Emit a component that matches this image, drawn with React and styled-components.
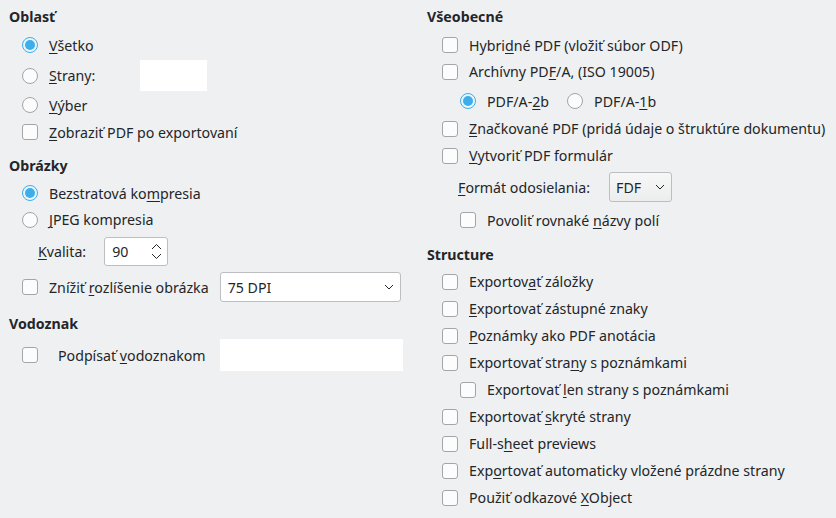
import React from "react";
import styled, { createGlobalStyle } from "styled-components";

const Global = createGlobalStyle`
  html, body { margin: 0; padding: 0; background: #eff0f1; }
  body { font-family: "Noto Sans", "Open Sans", sans-serif; font-size: 14.2px; color: #232629; }
`;

const Page = styled.div`
  width: 836px;
  height: 518px;
  box-sizing: border-box;
  padding: 6px 0 0 9px;
  display: grid;
  grid-template-columns: 394px 1fr;
  column-gap: 24px;
  background: #eff0f1;
`;

const Column = styled.div`
  display: flex;
  flex-direction: column;
`;

const Heading = styled.div`
  height: 22px;
  line-height: 22px;
  font-weight: 700;
  margin-top: ${(p) => p.$mt || 0}px;
`;

const Row = styled.div`
  display: flex;
  align-items: center;
  height: ${(p) => p.$h || 27}px;
  margin-top: ${(p) => p.$mt || 0}px;
  padding-left: ${(p) => p.$indent || 0}px;
`;

const Option = styled.label`
  display: flex;
  align-items: center;
  gap: ${(p) => p.$gap || 11}px;
  white-space: nowrap;
  margin-left: ${(p) => p.$ml || 0}px;
`;

const Mn = styled.span`
  text-decoration: underline;
  text-underline-offset: 2px;
  text-decoration-thickness: 1px;
`;

const Box = styled.span`
  width: 16px;
  height: 16px;
  box-sizing: border-box;
  border: 1px solid #a3a5a8;
  border-radius: 3px;
  background: #fcfcfc;
  flex: none;
`;

const Radio = styled.span`
  width: 16px;
  height: 16px;
  box-sizing: border-box;
  border-radius: 50%;
  border: 1px solid ${(p) => (p.$on ? "#3daee9" : "#a3a5a8")};
  background: ${(p) => (p.$on ? "#eaf6fc" : "#fcfcfc")};
  display: flex;
  align-items: center;
  justify-content: center;
  flex: none;
  &::after {
    content: "";
    display: ${(p) => (p.$on ? "block" : "none")};
    width: 10px;
    height: 10px;
    border-radius: 50%;
    background: #3daee9;
  }
`;

const TextField = styled.div`
  width: ${(p) => p.$w}px;
  height: ${(p) => p.$hh}px;
  background: #ffffff;
  margin-left: ${(p) => p.$ml || 0}px;
  flex: none;
`;

const Spin = styled.div`
  width: 64px;
  height: 29px;
  box-sizing: border-box;
  background: #fff;
  border: 1px solid #bcbec1;
  border-radius: 3px;
  display: flex;
  align-items: center;
  justify-content: space-between;
  padding: 0 5px 0 7px;
  margin-left: ${(p) => p.$ml || 0}px;
  flex: none;
`;

const Combo = styled.div`
  width: ${(p) => p.$w}px;
  height: 30px;
  box-sizing: border-box;
  background: ${(p) => (p.$button ? "linear-gradient(#f7f7f8, #eceded)" : "#fff")};
  border: 1px solid #bcbec1;
  border-radius: 3px;
  display: flex;
  align-items: center;
  justify-content: space-between;
  padding: 0 6px 0 ${(p) => p.$pl || 6}px;
  margin-left: ${(p) => p.$ml || 0}px;
  flex: none;
`;

const Chevron = () => (
  <svg width="10" height="6" viewBox="0 0 10 6">
    <path d="M1 1 L5 5 L9 1" fill="none" stroke="#232629" strokeWidth="1" />
  </svg>
);

const SpinArrows = () => (
  <svg width="11" height="17" viewBox="0 0 11 17">
    <path d="M1 6 L5.5 1.5 L10 6" fill="none" stroke="#232629" strokeWidth="1" />
    <path d="M1 11 L5.5 15.5 L10 11" fill="none" stroke="#232629" strokeWidth="1" />
  </svg>
);

const Check = ({ children, indent, mt, h }) => (
  <Row $indent={indent} $mt={mt} $h={h}>
    <Option>
      <Box />
      <span>{children}</span>
    </Option>
  </Row>
);

export default function App() {
  return (
    <>
      <Global />
      <Page>
        <Column>
          <Heading>Oblasť</Heading>
          <Row $indent={13} $mt={4} $h={26}>
            <Option>
              <Radio $on />
              <span><Mn>V</Mn>šetko</span>
            </Option>
          </Row>
          <Row $indent={13} $mt={2} $h={31}>
            <Option>
              <Radio />
              <span><Mn>S</Mn>trany:</span>
            </Option>
            <TextField $w={67} $hh={31} $ml={45} />
          </Row>
          <Row $indent={13} $h={28}>
            <Option>
              <Radio />
              <span><Mn>V</Mn>ýber</span>
            </Option>
          </Row>
          <Check indent={13} h={26}><Mn>Z</Mn>obraziť PDF po exportovaní</Check>

          <Heading $mt={10}>Obrázky</Heading>
          <Row $indent={13} $mt={3} $h={26}>
            <Option>
              <Radio $on />
              <span>Bezstratová ko<Mn>m</Mn>presia</span>
            </Option>
          </Row>
          <Row $indent={13} $h={27}>
            <Option>
              <Radio />
              <span><Mn>J</Mn>PEG kompresia</span>
            </Option>
          </Row>
          <Row $indent={29} $mt={4} $h={29}>
            <span><Mn>K</Mn>valita:</span>
            <Spin $ml={18}>
              <span>90</span>
              <SpinArrows />
            </Spin>
          </Row>
          <Row $indent={13} $mt={6} $h={30}>
            <Option>
              <Box />
              <span>Znížiť <Mn>r</Mn>ozlíšenie obrázka</span>
            </Option>
            <Combo $w={181} $ml={11} $pl={7}>
              <span>75 DPI</span>
              <Chevron />
            </Combo>
          </Row>

          <Heading $mt={11}>Vodoznak</Heading>
          <Row $indent={13} $mt={4} $h={32}>
            <Option $gap={20}>
              <Box />
              <span>Podpísať <Mn>v</Mn>odoznakom</span>
            </Option>
            <TextField $w={183} $hh={32} $ml={14} />
          </Row>
        </Column>

        <Column>
          <Heading>Všeobecné</Heading>
          <Check indent={15} mt={4} h={26}>Hybri<Mn>d</Mn>né PDF (vložiť súbor ODF)</Check>
          <Check indent={15} h={27}>Archívny PD<Mn>F</Mn>/A, (ISO 19005)</Check>
          <Row $indent={33} $mt={2} $h={28}>
            <Option>
              <Radio $on />
              <span>PDF/A-<Mn>2</Mn>b</span>
            </Option>
            <Option $ml={18}>
              <Radio />
              <span>PDF/A-<Mn>1</Mn>b</span>
            </Option>
          </Row>
          <Check indent={15} h={27}><Mn>Z</Mn>načkované PDF (pridá údaje o štruktúre dokumentu)</Check>
          <Check indent={15} h={27}><Mn>V</Mn>ytvoriť PDF formulár</Check>
          <Row $indent={31} $mt={3} $h={30}>
            <span><Mn>F</Mn>ormát odosielania:</span>
            <Combo $w={63} $ml={19} $button>
              <span>FDF</span>
              <Chevron />
            </Combo>
          </Row>
          <Check indent={33} mt={4} h={28}>Povoliť rovnaké <Mn>n</Mn>ázvy polí</Check>

          <Heading $mt={10}>Structure</Heading>
          <Check indent={15} mt={2}>Exportov<Mn>a</Mn>ť záložky</Check>
          <Check indent={15}><Mn>E</Mn>xportovať zástupné znaky</Check>
          <Check indent={15}><Mn>P</Mn>oznámky ako PDF anotácia</Check>
          <Check indent={15}>Exportovať stra<Mn>n</Mn>y s poznámkami</Check>
          <Check indent={33}>Exportovať <Mn>l</Mn>en strany s poznámkami</Check>
          <Check indent={15}>Exportovať <Mn>s</Mn>kryté strany</Check>
          <Check indent={15}>Full-s<Mn>h</Mn>eet previews</Check>
          <Check indent={15}>Exp<Mn>o</Mn>rtovať automaticky vložené prázdne strany</Check>
          <Check indent={15}>Použiť odkazové <Mn>X</Mn>Object</Check>
        </Column>
      </Page>
    </>
  );
}
